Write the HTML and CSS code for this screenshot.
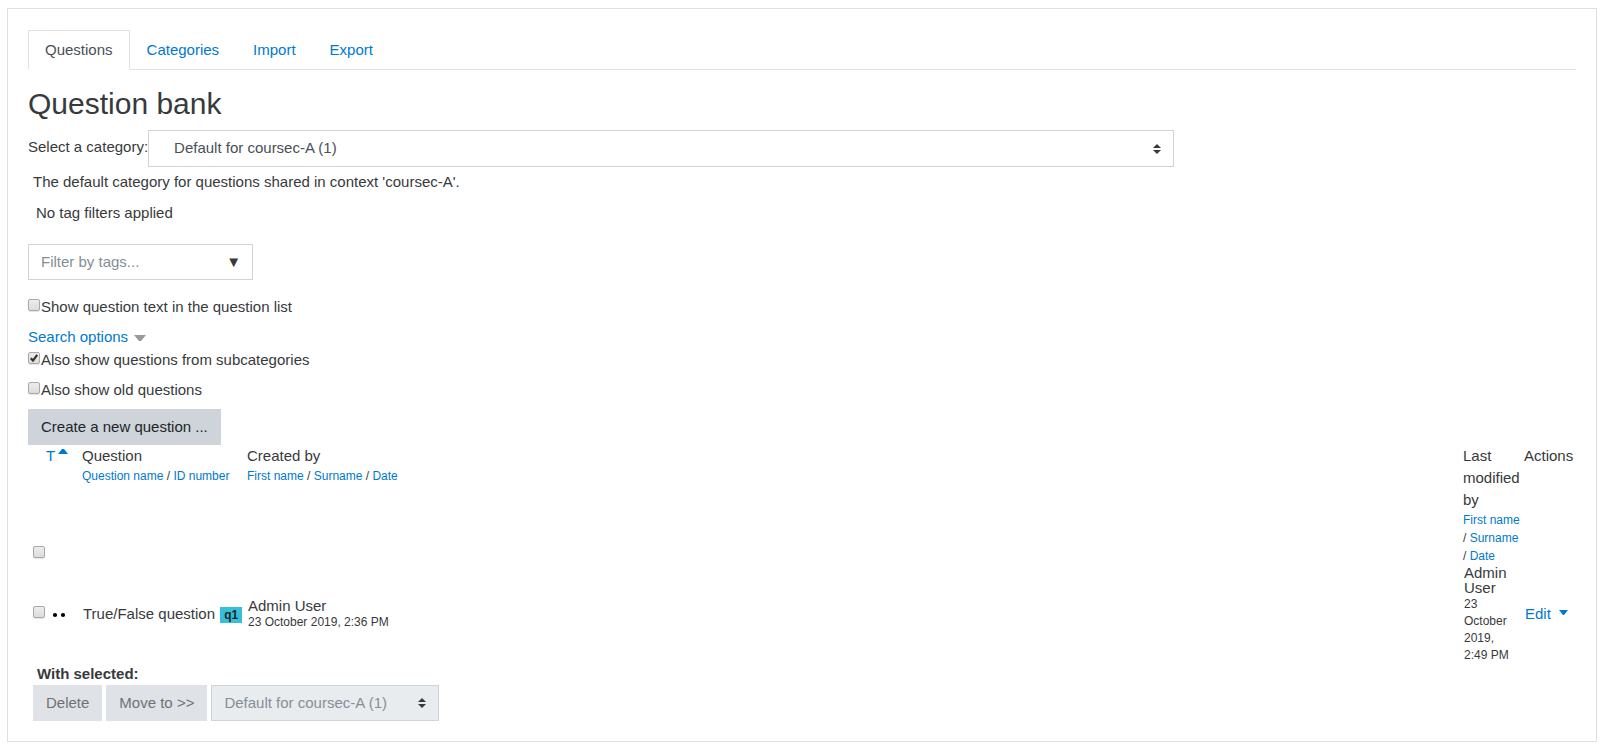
FILE: index.html
```html
<!DOCTYPE html>
<html lang="en">
<head>
<meta charset="utf-8">
<title>Question bank</title>
<link rel="stylesheet" href="styles.css">
</head>
<body>
<main class="card">
  <nav class="tabs">
    <a class="tab active" href="#questions">Questions</a>
    <a class="tab" href="#categories">Categories</a>
    <a class="tab" href="#import">Import</a>
    <a class="tab" href="#export">Export</a>
  </nav>
  <h2 class="title">Question bank</h2>

  <div class="category">
    <label for="category">Select a category:</label>
    <select id="category" class="select category-select"><option>Default for coursec-A (1)</option></select>
  </div>
  <p class="category-info">The default category for questions shared in context 'coursec-A'.</p>
  <p class="tag-info">No tag filters applied</p>

  <div class="tag-filter">
    <input class="tag-input" type="text" placeholder="Filter by tags..." aria-label="Filter by tags">
    <span class="tag-arrow">▼</span>
  </div>

  <div class="check-row">
    <input type="checkbox" class="check" id="showtext"><label for="showtext">Show question text in the question list</label>
  </div>
  <div class="search-options">
    <a href="#search">Search options</a>
    <svg class="search-caret" viewBox="0 0 12 6"><path d="M0 0h12L7 6H5z" fill="#999"/></svg>
  </div>
  <div class="check-row">
    <input type="checkbox" class="check" id="recurse" checked><label for="recurse">Also show questions from subcategories</label>
  </div>
  <div class="check-row">
    <input type="checkbox" class="check" id="old"><label for="old">Also show old questions</label>
  </div>
  <button class="btn create" type="button">Create a new question ...</button>

  <table class="questions">
    <colgroup>
      <col class="col-check"><col class="col-type"><col class="col-name"><col><col class="col-modified"><col class="col-actions">
    </colgroup>
    <thead>
      <tr>
        <th class="head-check"><input type="checkbox" class="check" aria-label="Select all"></th>
        <th><a class="sort" href="#type">T<svg class="sort-caret" viewBox="0 0 10 5"><path d="M0 5L4 0h2l4 5z" fill="#0079d0"/></svg></a></th>
        <th>Question<div class="sorters"><a href="#name">Question name</a> / <a href="#id">ID number</a></div></th>
        <th>Created by<div class="sorters"><a href="#cfirst">First name</a> / <a href="#clast">Surname</a> / <a href="#cdate">Date</a></div></th>
        <th>Last modified by<div class="sorters"><a href="#mfirst">First name</a> / <a href="#mlast">Surname</a> / <a href="#mdate">Date</a></div></th>
        <th>Actions</th>
      </tr>
    </thead>
    <tbody>
      <tr>
        <td class="cell-check"><input type="checkbox" class="check" aria-label="Select True/False question"></td>
        <td class="cell-type"><svg class="type-icon" viewBox="0 0 16 16"><circle cx="4" cy="9" r="2.1"/><circle cx="12" cy="9" r="2.1"/></svg></td>
        <td><div class="name">True/False question <span class="badge">q1</span></div></td>
        <td><div class="user">Admin User</div><div class="date">23 October 2019, 2:36 PM</div></td>
        <td><div class="user">Admin User</div><div class="date">23 October 2019, 2:49 PM</div></td>
        <td><a class="edit" href="#edit">Edit<svg class="edit-caret" viewBox="0 0 9 5"><path d="M0 0h9L5 5H4z" fill="#0079d0"/></svg></a></td>
      </tr>
    </tbody>
  </table>

  <div class="bulk">
    <strong class="bulk-title">With selected:</strong>
    <div class="bulk-row">
      <button class="btn" type="button" disabled>Delete</button>
      <button class="btn" type="button" disabled>Move to &gt;&gt;</button>
      <select class="select bulk-select" disabled aria-label="Target category"><option>Default for coursec-A (1)</option></select>
    </div>
  </div>
</main>
</body>
</html>
```
FILE: styles.css
```css
* { box-sizing: border-box; }

body {
  margin: 8px 8px 0 7px;
  background: #fff;
  color: #373a3c;
  font: 15px/22px "Liberation Sans", Arial, sans-serif;
}

a { color: #0079d0; text-decoration: none; }
p { margin: 0; }
input, select, button { font: inherit; margin: 0; border-radius: 0; }
svg { flex: none; }

.card { border: 1px solid #dfdfdf; padding: 21px 20px 20px; }

.tabs { display: flex; border-bottom: 1px solid #dee2e6; }
.tab { padding: 8px 16px; border: 1px solid transparent; margin-bottom: -1px; }
.tab.active { color: #495057; background: #fff; border-color: #dee2e6 #dee2e6 #fff; }

.title { margin: 16px 0 8px; font-size: 30px; line-height: 36px; font-weight: 400; }

.select {
  appearance: none;
  height: 36px;
  padding: 6px 24px 6px 12px;
  border: 1px solid #ced4da;
  color: #495057;
  background: #fff url("data:image/svg+xml,%3Csvg xmlns='http://www.w3.org/2000/svg' viewBox='0 0 4 5'%3E%3Cpath fill='%23343a40' d='M2 0L0 2h4zm0 5L0 3h4z'/%3E%3C/svg%3E") no-repeat right 12px center / 8px 10px;
}
.select:disabled { color: #868e96; background-color: #e9ecef; opacity: 1; }

.category { display: flex; width: 74%; line-height: 34px; }
.category-select { flex: 1; height: 37px; padding: 5px 24px 7px 25px; line-height: 22px; }
.category-info { padding: 4px 5px; }
.tag-info { padding: 5px 8px 0; margin-bottom: 20px; }

.tag-filter { position: relative; width: 225px; margin-bottom: 16px; }
.tag-input {
  display: block;
  width: 100%;
  height: 36px;
  padding: 5px 32px 7px 12px;
  border: 1px solid #ced4da;
  color: #495057;
}
.tag-input::placeholder { color: #868e96; opacity: 1; }
.tag-arrow { position: absolute; top: 7px; right: 12px; pointer-events: none; }

.check-row { display: flex; gap: 1px; margin-bottom: 8px; }
.check {
  appearance: none;
  flex: none;
  display: block;
  width: 12px;
  height: 12px;
  margin: 3px 0 0;
  border: 1px solid #a9a9a9;
  border-radius: 2px;
  background: linear-gradient(#ededed, #dcdcdc);
  box-shadow: 0 1px 1px #e4e4e4;
}
.check:checked {
  background: url("data:image/svg+xml,%3Csvg xmlns='http://www.w3.org/2000/svg' viewBox='0 0 10 10'%3E%3Cpath d='M1.8 5.2L4 7.6 8.2 1.8' fill='none' stroke='%23333' stroke-width='2.2'/%3E%3C/svg%3E"), linear-gradient(#ededed, #dcdcdc);
}

.search-options { display: flex; align-items: center; gap: 6px; margin-bottom: 1px; }
.search-caret { width: 12px; height: 6px; margin-top: 2px; }

.btn {
  display: block;
  height: 36px;
  padding: 6px 12px;
  border: 1px solid #ced4da;
  background: #ced4da;
  color: #212529;
}
.btn:disabled { opacity: .65; }

.questions { width: 100%; table-layout: fixed; border-collapse: collapse; }
.questions th { padding: 0 4px 0 0; font-weight: 400; text-align: left; vertical-align: top; }
.questions td { padding: 0 4px 0 1px; vertical-align: middle; }
.questions th:last-child { padding-right: 0; }
.col-check { width: 18px; }
.col-type { width: 36px; }
.col-name { width: 165px; }
.col-modified { width: 61px; }
.col-actions { width: 52px; }
.questions .head-check { padding: 0 0 7px 5px; vertical-align: bottom; }
.questions .cell-check { padding: 0 0 4px 5px; }
.cell-check .check { margin: 0; }
.questions .cell-type { padding: 0 0 0 5px; }
.sorters { font-size: 12px; line-height: 18px; }
.sort { display: flex; gap: 3px; }
.sort-caret { width: 10px; height: 5px; margin-top: 4px; }
.type-icon { display: block; width: 16px; height: 16px; }
.name { white-space: nowrap; }
.badge {
  display: inline-block;
  margin-left: 1px;
  padding: 2px 4px;
  background: #36bfd9;
  color: #212529;
  font-size: 12px;
  line-height: 12px;
  font-weight: 700;
}
.user { line-height: 15px; }
.date { margin: 1px 0 -1px; font-size: 12px; line-height: 17px; }
.edit { display: flex; gap: 8px; }
.edit-caret { width: 9px; height: 5px; margin-top: 7px; }

.bulk { padding: 0 5px; }
.bulk-title { display: block; padding-left: 4px; }
.bulk-row { display: flex; gap: 4px; }
.bulk-select { width: 228px; }
```
